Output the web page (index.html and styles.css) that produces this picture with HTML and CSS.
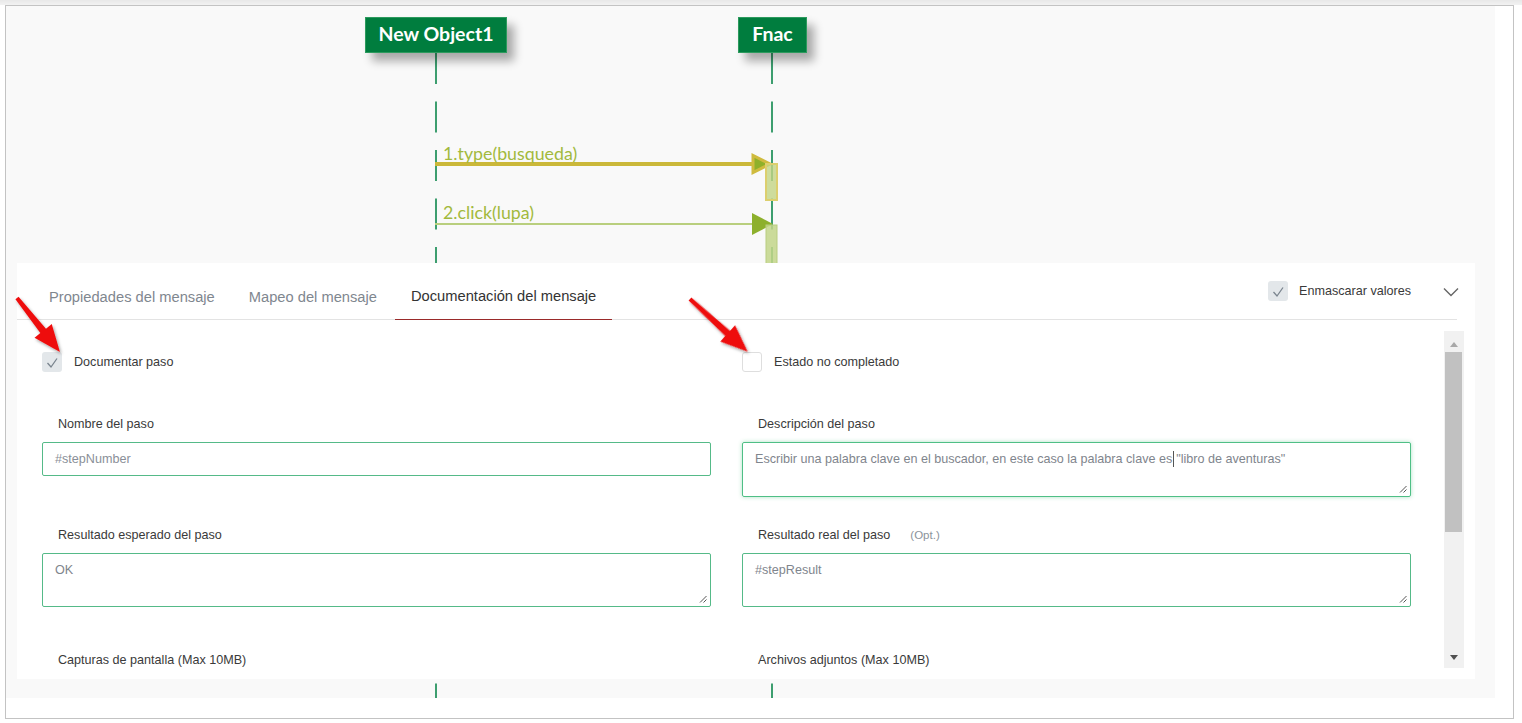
FILE: index.html
```html
<!DOCTYPE html>
<html lang="es">
<head>
<meta charset="utf-8">
<title>Documentación del mensaje</title>
<link rel="stylesheet" href="styles.css">
</head>
<body>
<div class="topstrip"></div>
<div class="frame">
  <div class="canvas">
    <svg class="diagram" width="1489" height="692" viewBox="6 6 1489 692">
      <g class="lifelines">
        <line x1="436" y1="53" x2="436" y2="698" stroke="#3d9e6f" stroke-width="2" stroke-dasharray="31 17.5"/>
        <line x1="772" y1="53" x2="772" y2="698" stroke="#3d9e6f" stroke-width="2" stroke-dasharray="31 17.5"/>
      </g>
      <line x1="435" y1="164" x2="753" y2="164" stroke="#cbb83a" stroke-width="4"/>
      <polygon points="753,155.5 753,172.5 770,164" fill="#8fb02a" stroke="#cfbb3e" stroke-width="3"/>
      <rect x="766" y="164" width="11" height="36" fill="#c3d585" fill-opacity="0.8" stroke="#dccf6e" stroke-width="2"/>
      <text x="443" y="160" class="msg">1.type(busqueda)</text>

      <line x1="435" y1="224" x2="753" y2="224" stroke="#b9cf7e" stroke-width="2"/>
      <polygon points="752,213 752,235 773,224" fill="#8db02c"/>
      <rect x="766" y="225" width="11" height="40" fill="#c3d68a" fill-opacity="0.85" stroke="#b9cd80" stroke-width="1"/>
      <text x="443" y="219" class="msg">2.click(lupa)</text>
    </svg>

    <div class="node node-a">New Object1</div>
    <div class="node node-b">Fnac</div>

    <div class="panel">
      <div class="panel-head">
        <div class="tabs">
          <div class="tab">Propiedades del mensaje</div>
          <div class="tab">Mapeo del mensaje</div>
          <div class="tab active">Documentación del mensaje</div>
        </div>
        <div class="head-tools">
          <span class="cb checked"><svg viewBox="0 0 20 20" width="20" height="20"><path d="M5.5 11 L9 15 L15 6.5" fill="none" stroke="#7a848e" stroke-width="1.3"/></svg></span>
          <span class="tool-label">Enmascarar valores</span>
          <svg class="chev" viewBox="0 0 16 10" width="16" height="10"><path d="M1 1.5 L8 8.5 L15 1.5" fill="none" stroke="#666" stroke-width="1.4"/></svg>
        </div>
      </div>
      <div class="panel-body">
        <div class="scroll-content">
          <div class="row row-checks">
            <label class="check">
              <span class="cb checked"><svg viewBox="0 0 20 20" width="20" height="20"><path d="M5.5 11 L9 15 L15 6.5" fill="none" stroke="#7a848e" stroke-width="1.3"/></svg></span>
              <span class="check-label">Documentar paso</span>
            </label>
            <label class="check">
              <span class="cb"></span>
              <span class="check-label">Estado no completado</span>
            </label>
          </div>

          <div class="row row-a">
            <div class="field">
              <div class="field-label">Nombre del paso</div>
              <div class="input">#stepNumber</div>
            </div>
            <div class="field">
              <div class="field-label">Descripción del paso</div>
              <div class="textarea focus tall">Escribir una palabra clave en el buscador, en este caso la palabra clave es<span class="caret"></span>"libro de aventuras"<svg class="grip" viewBox="0 0 8 8" width="8" height="8"><path d="M7.5 1 L1 7.5 M7.5 4.5 L4.5 7.5" stroke="#555" stroke-width="1"/></svg></div>
            </div>
          </div>

          <div class="row row-b">
            <div class="field">
              <div class="field-label">Resultado esperado del paso</div>
              <div class="textarea">OK<svg class="grip" viewBox="0 0 8 8" width="8" height="8"><path d="M7.5 1 L1 7.5 M7.5 4.5 L4.5 7.5" stroke="#555" stroke-width="1"/></svg></div>
            </div>
            <div class="field">
              <div class="field-label">Resultado real del paso<span class="opt">(Opt.)</span></div>
              <div class="textarea">#stepResult<svg class="grip" viewBox="0 0 8 8" width="8" height="8"><path d="M7.5 1 L1 7.5 M7.5 4.5 L4.5 7.5" stroke="#555" stroke-width="1"/></svg></div>
            </div>
          </div>

          <div class="row row-c">
            <div class="field">
              <div class="field-label">Capturas de pantalla (Max 10MB)</div>
            </div>
            <div class="field">
              <div class="field-label">Archivos adjuntos (Max 10MB)</div>
            </div>
          </div>
        </div>
        <div class="scrollbar">
          <div class="sb-btn"><svg viewBox="0 0 20 20" width="20" height="20"><path d="M6 15 L10 10 L14 15 Z" fill="#a8a8a8"/></svg></div>
          <div class="sb-track"><div class="sb-thumb"></div></div>
          <div class="sb-btn"><svg viewBox="0 0 20 20" width="20" height="20"><path d="M6 7 L14 7 L10 12 Z" fill="#505050"/></svg></div>
        </div>
      </div>
    </div>

    <svg class="annotations" width="1489" height="692" viewBox="6 6 1489 692">
      <defs>
        <filter id="sh" x="-30%" y="-30%" width="160%" height="160%">
          <feDropShadow dx="1.5" dy="2" stdDeviation="1.5" flood-color="#000" flood-opacity="0.35"/>
        </filter>
      </defs>
      <g filter="url(#sh)" fill="#ee1111">
        <path transform="translate(17 298) rotate(51.5)" d="M0 -2 L42 -3.6 L42 -11 L69 0 L42 11 L42 3.6 L0 2 Z"/>
        <path transform="translate(690 299) rotate(42.4)" d="M0 -2 L51 -3.6 L51 -11 L78 0 L51 11 L51 3.6 L0 2 Z"/>
      </g>
    </svg>
  </div>
</div>
</body>
</html>
```

FILE: styles.css
```css
html, body {
  margin: 0;
  padding: 0;
  background: #ffffff;
}

body {
  font-family: "Liberation Sans", Arial, sans-serif;
  color: #3a3a3a;
  width: 1522px;
  height: 723px;
  overflow: hidden;
}

.topstrip {
  height: 5px;
  background: linear-gradient(#e8e8e8, #f2f2f2);
}

.frame {
  margin-left: 5px;
  width: 1507px;
  height: 712px;
  border: 1px solid #c3c3c3;
  background: #ffffff;
}

.canvas {
  position: relative;
  width: 1489px;
  height: 692px;
  background: #f9f9f9;
}

.diagram,
.annotations {
  position: absolute;
  left: 0;
  top: 0;
  overflow: visible;
}

.annotations {
  pointer-events: none;
}

.msg {
  font-family: Lato, "Open Sans", sans-serif;
  font-size: 17.8px;
  fill: #a2b93d;
}

.node {
  position: absolute;
  top: 11px;
  height: 36px;
  box-sizing: border-box;
  padding-bottom: 3px;
  background: #007d3e;
  border: 1px solid #2c9a5d;
  color: #ffffff;
  font-family: Lato, "Open Sans", sans-serif;
  font-weight: 700;
  font-size: 19.5px;
  display: flex;
  align-items: center;
  justify-content: center;
  box-shadow: 7px 8px 9px rgba(0, 0, 0, 0.33);
}

.node-a {
  left: 359px;
  width: 142px;
}

.node-b {
  left: 732px;
  width: 69px;
}

/* Panel */
.panel {
  position: absolute;
  left: 11px;
  top: 257px;
  width: 1458px;
  height: 416px;
  background: #ffffff;
  display: flex;
  flex-direction: column;
}

.panel-head {
  height: 57px;
  box-sizing: border-box;
  margin-right: 18px;
  border-bottom: 1px solid #e3e3e3;
  display: flex;
}

.tabs {
  display: flex;
  gap: 2px;
  padding-left: 16px;
}

.tab {
  height: 57px;
  margin-bottom: -1px;
  box-sizing: border-box;
  padding: 10px 16px 0;
  display: flex;
  align-items: center;
  font-size: 14.7px;
  color: #7f878f;
  white-space: nowrap;
}

.tab.active {
  color: #333333;
  border-bottom: 1px solid #9a2a2a;
}

.head-tools {
  margin-left: auto;
  padding-top: 18px;
  display: flex;
  align-items: flex-start;
}

.tool-label {
  margin-left: 11px;
  font-size: 12.6px;
  line-height: 20px;
  color: #3a3a3a;
}

.chev {
  margin-left: 32px;
  margin-right: -2px;
  margin-top: 6px;
}

.cb {
  width: 20px;
  height: 20px;
  box-sizing: border-box;
  border: 1px solid #dedede;
  border-radius: 3px;
  background: #ffffff;
  display: inline-flex;
  flex: none;
}

.cb.checked {
  border: none;
  background: #e3e7ea;
}

.cb svg {
  display: block;
}

.panel-body {
  margin-top: 11px;
  height: 337px;
  margin-right: 11px;
  display: flex;
}

.scroll-content {
  flex: 1;
  overflow: hidden;
  padding: 21px 0 0 25px;
}

.row {
  display: grid;
  grid-template-columns: 669px 669px;
  column-gap: 31px;
  align-items: start;
}

.row-a {
  margin-top: 43px;
}

.row-b {
  margin-top: 29px;
}

.row-c {
  margin-top: 44px;
}

.check {
  display: flex;
  align-items: center;
  height: 20px;
}

.check-label {
  margin-left: 12px;
  font-size: 12.6px;
  color: #3a3a3a;
}

.field-label {
  padding-left: 16px;
  font-size: 12.6px;
  line-height: 18px;
  margin-bottom: 9px;
  color: #3a3a3a;
  white-space: nowrap;
}

.opt {
  margin-left: 20px;
  font-size: 11.5px;
  color: #8b939b;
}

.input {
  height: 34px;
  box-sizing: border-box;
  border: 1px solid #55ba88;
  border-radius: 2px;
  padding: 0 12px;
  line-height: 32px;
  font-size: 12.6px;
  color: #8a8f98;
}

.textarea {
  position: relative;
  height: 54px;
  box-sizing: border-box;
  border: 1px solid #55ba88;
  border-radius: 2px;
  padding: 7px 12px;
  line-height: 18px;
  font-size: 12.6px;
  color: #7f858d;
  white-space: nowrap;
}

.textarea.tall {
  height: 55px;
}

.textarea.focus {
  border-color: #4fbf86;
  box-shadow: 0 0 4px rgba(70, 190, 125, 0.45);
}

.caret {
  display: inline-block;
  width: 1px;
  height: 16px;
  background: #555555;
  vertical-align: -4px;
  margin: 0 2px 0 1px;
}

.grip {
  position: absolute;
  right: 3px;
  bottom: 3px;
}

/* Scrollbar */
.scrollbar {
  width: 20px;
  background: #f1f1f1;
  display: flex;
  flex-direction: column;
}

.sb-btn {
  height: 21px;
  display: flex;
  align-items: center;
  justify-content: center;
}

.sb-track {
  flex: 1;
  position: relative;
}

.sb-thumb {
  height: 180px;
  margin: 0 2px 0 1px;
  background: #c1c1c1;
}
```
